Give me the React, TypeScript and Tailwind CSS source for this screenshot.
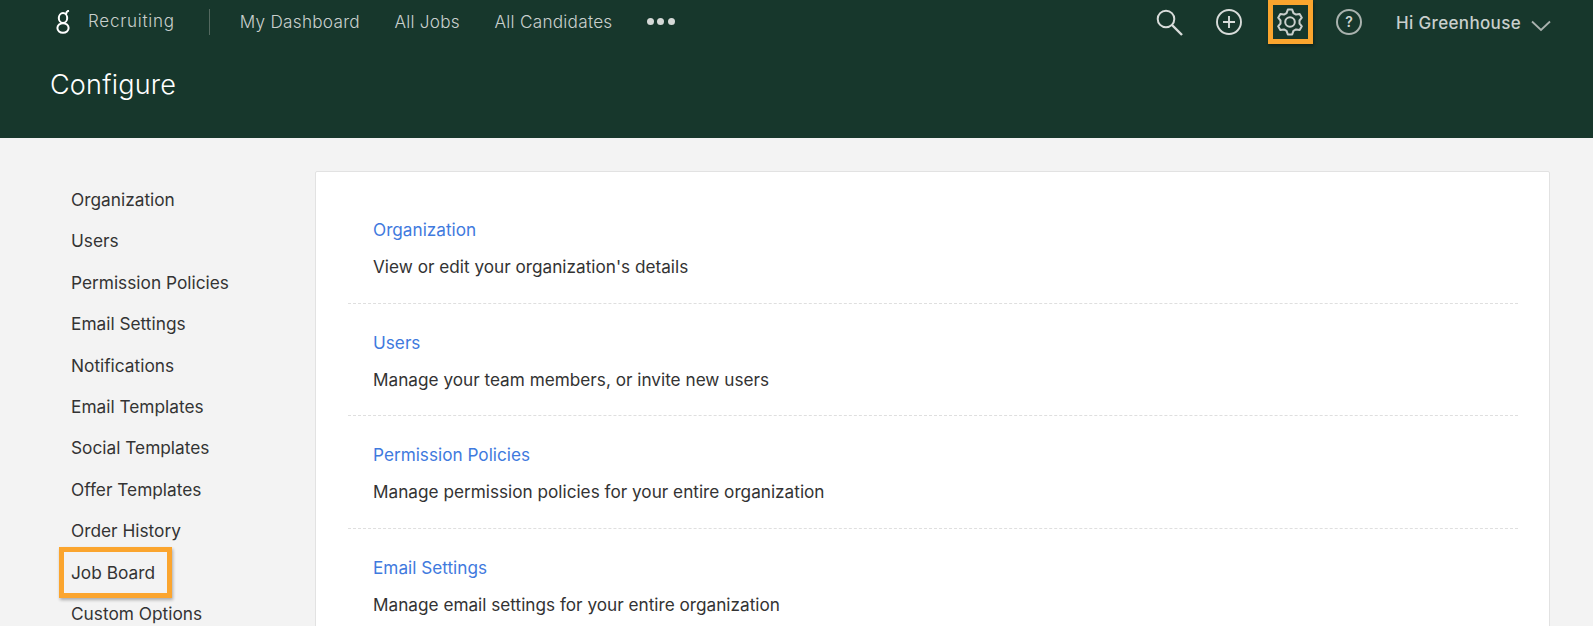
import React from "react";

const side = ["Organization","Users","Permission Policies","Email Settings","Notifications","Email Templates","Social Templates","Offer Templates","Order History","Job Board","Custom Options"];
const rows = [
  ["Organization","View or edit your organization's details"],
  ["Users","Manage your team members, or invite new users"],
  ["Permission Policies","Manage permission policies for your entire organization"],
  ["Email Settings","Manage email settings for your entire organization"],
];

function gearPath() {
  const pts: string[] = [];
  const p = (r: number, deg: number) => {
    const a = (deg * Math.PI) / 180;
    return `${(14 + r * Math.cos(a)).toFixed(2)} ${(14 + r * Math.sin(a)).toFixed(2)}`;
  };
  for (let i = 0; i < 6; i++) {
    const a = -90 + i * 60;
    pts.push(p(9.6, a - 21), p(12.6, a - 10), p(12.6, a + 10), p(9.6, a + 21));
  }
  return "M" + pts.join(" L") + " Z";
}

export default function App() {
  return (
    <div className="h-[626px] w-[1593px] overflow-hidden bg-[#f3f3f3] font-['Inter','Liberation_Sans',sans-serif]">
      <header className="h-[138px] bg-[#17372c] pl-[50px] pr-[42px]">
        <div className="flex h-[44px] items-center">
          <svg width="16" height="26" viewBox="0 0 16 26" fill="none" stroke="#fff" strokeWidth="2" className="ml-[5px] mt-[1px]">
            <ellipse cx="8" cy="8" rx="4.2" ry="4.9" />
            <ellipse cx="8" cy="18" rx="5.6" ry="4.8" />
            <path d="M11 4.5 C11 2.5 12 1 14 0.6" />
          </svg>
          <span className="ml-[17px] text-[17px] font-light tracking-[0.75px] text-[#c9cfcc]">Recruiting</span>
          <div className="ml-[34px] h-[26px] w-px bg-[#53685f]" />
          <nav className="ml-[30px] flex items-center gap-[34.5px] text-[17.2px] font-light tracking-[0.25px] text-[#c9cfcc]">
            <span>My Dashboard</span>
            <span>All Jobs</span>
            <span>All Candidates</span>
            <span className="flex gap-[3.5px]">
              <i className="size-[7px] rounded-full bg-[#d5d9d7]" />
              <i className="size-[7px] rounded-full bg-[#d5d9d7]" />
              <i className="size-[7px] rounded-full bg-[#d5d9d7]" />
            </span>
          </nav>
          <div className="ml-auto flex items-center">
            <svg width="30" height="30" viewBox="0 0 30 30" fill="none" stroke="#d8dcda" strokeWidth="2">
              <circle cx="12" cy="12" r="8.3" />
              <path d="M18 18 L28 28" strokeWidth="2.4" />
            </svg>
            <svg width="28" height="28" viewBox="0 0 28 28" fill="none" stroke="#d8dcda" strokeWidth="1.9" className="ml-[31px]">
              <circle cx="14" cy="14" r="12" />
              <path d="M14 8 V20 M8 14 H20" />
            </svg>
            <div className="ml-[25px] flex h-[44px] w-[45px] items-center justify-center border-[5px] border-[#fba52e] shadow-[1px_2px_3px_rgba(0,0,0,0.35)]">
              <svg width="28" height="28" viewBox="0 0 28 28" fill="none" stroke="#c9cfcc" strokeWidth="2" strokeLinejoin="round" className="shrink-0">
                <path d={gearPath()} />
                <circle cx="14" cy="14" r="4.8" />
              </svg>
            </div>
            <div className="ml-[23px] flex size-[26px] items-center justify-center rounded-full border-2 border-[#a9b2ae] text-[14px] font-semibold leading-none text-[#d0d5d2]">?</div>
            <span className="ml-[34px] mt-[4px] text-[17px] font-medium tracking-[0.35px] text-[#c9cfcc]">Hi Greenhouse</span>
            <svg width="20" height="12" viewBox="0 0 20 12" fill="none" stroke="#a9b2ae" strokeWidth="1.8" className="ml-[10px] mt-[7px]">
              <path d="M1 1.5 L10 10 L19 1.5" />
            </svg>
          </div>
        </div>
        <h1 className="mt-[23px] text-[27px] font-light leading-[36px] tracking-[0.2px] text-white">Configure</h1>
      </header>
      <div className="flex pl-[71px] pr-[43px] pt-[33px]">
        <aside className="flex w-[244px] shrink-0 flex-col pt-[8px] text-[17.3px] text-[#333]">
          {side.map((s) => (
            <div key={s} className="relative flex h-[41.45px] shrink-0 items-center">
              {s === "Job Board" && (
                <div className="absolute left-[-12px] top-[-5px] h-[51px] w-[113px] border-[5px] border-[#fba52e] shadow-[1px_2px_3px_rgba(0,0,0,0.3)]" />
              )}
              {s}
            </div>
          ))}
        </aside>
        <main className="flex-1 rounded-[2px] border border-[#e2e2e2] bg-white pl-[32px] pr-[31px] pt-[19px]">
          {rows.map(([t, d], i) => (
            <div key={t} className={`h-[112.7px] pl-[25px] pt-[26px] ${i < 3 ? "border-b border-dashed border-[#dfdfdf]" : ""}`}>
              <div className="h-[37px] text-[17.2px] leading-[26px] text-[#3f7ade]">{t}</div>
              <div className="text-[17.2px] leading-[26px] text-[#333]">{d}</div>
            </div>
          ))}
        </main>
      </div>
    </div>
  );
}
